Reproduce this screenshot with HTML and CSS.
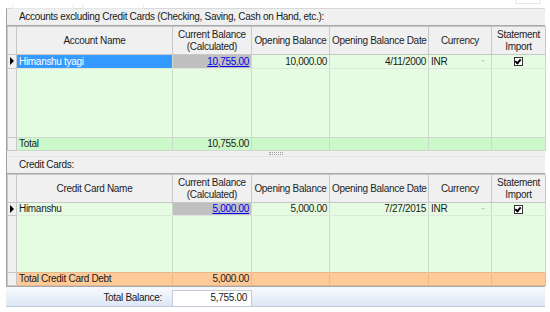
FILE: index.html
```html
<!DOCTYPE html>
<html lang="en">
<head>
    <meta charset="UTF-8">
    <title>Accounts</title>
    <link rel="stylesheet" href="styles.css">
</head>
<body>
    <div class="tabs">
        <span class="tab"></span>
        <span class="tab"></span>
        <span class="tab tab-right"></span>
    </div>
    <div class="panel">
        <div class="section-title">Accounts excluding Credit Cards (Checking, Saving, Cash on Hand, etc.):</div>
        <table class="grid">
            <colgroup>
                <col class="c-rh"><col class="c-name"><col class="c-cur"><col class="c-open"><col class="c-date"><col class="c-ccy"><col class="c-stmt">
            </colgroup>
            <tr class="head">
                <th class="rh"></th>
                <th>Account Name</th>
                <th>Current Balance<br>(Calculated)</th>
                <th>Opening Balance</th>
                <th>Opening Balance Date</th>
                <th>Currency</th>
                <th>Statement<br>Import</th>
            </tr>
            <tr class="row">
                <td class="rh"><span class="arrow"></span></td>
                <td class="selected"><span class="focus">Himanshu tyagi</span></td>
                <td class="num calc"><a href="#">10,755.00</a></td>
                <td class="num">10,000.00</td>
                <td class="num">4/11/2000</td>
                <td class="ccy">INR<span class="drop"></span></td>
                <td class="chk"><span class="box"></span></td>
            </tr>
            <tr class="filler filler-1">
                <td class="rh"></td><td></td><td></td><td></td><td></td><td></td><td></td>
            </tr>
            <tr class="total total-green">
                <td class="rh"></td>
                <td>Total</td>
                <td class="num">10,755.00</td>
                <td></td><td></td><td></td><td></td>
            </tr>
        </table>
        <div class="splitter"><span class="grip"></span></div>
        <div class="section-title">Credit Cards:</div>
        <table class="grid">
            <colgroup>
                <col class="c-rh"><col class="c-name"><col class="c-cur"><col class="c-open"><col class="c-date"><col class="c-ccy"><col class="c-stmt">
            </colgroup>
            <tr class="head">
                <th class="rh"></th>
                <th>Credit Card Name</th>
                <th>Current Balance<br>(Calculated)</th>
                <th>Opening Balance</th>
                <th>Opening Balance Date</th>
                <th>Currency</th>
                <th>Statement<br>Import</th>
            </tr>
            <tr class="row">
                <td class="rh"><span class="arrow"></span></td>
                <td>Himanshu</td>
                <td class="num calc"><a href="#">5,000.00</a></td>
                <td class="num">5,000.00</td>
                <td class="num">7/27/2015</td>
                <td class="ccy">INR<span class="drop"></span></td>
                <td class="chk"><span class="box"></span></td>
            </tr>
            <tr class="filler filler-2">
                <td class="rh"></td><td></td><td></td><td></td><td></td><td></td><td></td>
            </tr>
            <tr class="total total-orange">
                <td class="rh"></td>
                <td>Total Credit Card Debt</td>
                <td class="num">5,000.00</td>
                <td></td><td></td><td></td><td></td>
            </tr>
        </table>
    </div>
    <div class="footer-bar">
        <label class="balance-label">Total Balance:</label>
        <div class="balance-box">5,755.00</div>
    </div>
</body>
</html>
```

FILE: styles.css
```css
/* Base */
body {
    margin: 0;
    background: #fff;
    font-family: "Liberation Sans", Arial, sans-serif;
    font-size: 10px;
    letter-spacing: -0.3px;
    color: #1a1a1a;
}

/* Tabs peeking at the top */
.tabs {
    height: 8px;
    position: relative;
    margin: 0 5px 0 6px;
}

.tab {
    display: inline-block;
    width: 60px;
    height: 3px;
    border: 1px solid #e4e7ec;
    border-top: none;
    margin-left: 6px;
}

.tab-right {
    position: absolute;
    right: 4px;
    top: 0;
    width: 24px;
}

/* Panel */
.panel {
    margin: 0 5px 0 6px;
    border-left: 1px solid #a0a0a0;
    border-top: 1px solid #d8d8d8;
    background: #f0f0f0;
}

.section-title {
    height: 16px;
    line-height: 16px;
    padding-left: 12px;
    background: #f0f0f0;
    border-bottom: 1px solid #a8a8a8;
}

/* Grid */
.grid {
    width: 538px;
    border-collapse: collapse;
    table-layout: fixed;
    background: #e5fce3;
}

.c-rh { width: 9px; }
.c-name { width: 156px; }
.c-cur { width: 79px; }
.c-open { width: 78px; }
.c-date { width: 99px; }
.c-ccy { width: 63px; }
.c-stmt { width: 54px; }

.grid th,
.grid td {
    border: 1px solid #cfd8cd;
    padding: 0 2px;
    white-space: nowrap;
    overflow: hidden;
}

.grid th {
    background: #f0f0f0;
    border-color: #c8c8c8;
    font-weight: normal;
    height: 27px;
    line-height: 12px;
    color: #1e1e1e;
}

.grid .rh {
    background: #f0f0f0;
    border-color: #c8c8c8;
    padding: 0;
    position: relative;
}

.row td {
    height: 12px;
    line-height: 12px;
    border-bottom-color: #dfe8dd;
}

.num {
    text-align: right;
}

.calc {
    background: #c0c0c0;
}

.calc a {
    color: #0000ee;
}

.selected {
    background: #3399ff;
    color: #fff;
    padding: 0 !important;
}

.focus {
    display: block;
    height: 11px;
    line-height: 11px;
    padding-left: 1px;
    border: 1px dotted #e07820;
}

.arrow {
    position: absolute;
    left: 2px;
    top: 2px;
    width: 0;
    height: 0;
    border-top: 4px solid transparent;
    border-bottom: 4px solid transparent;
    border-left: 4px solid #000;
}

.ccy {
    position: relative;
}

.drop {
    position: absolute;
    right: 6px;
    top: 5px;
    border-left: 2px solid transparent;
    border-right: 2px solid transparent;
    border-top: 2px solid #c8c8c8;
}

.chk {
    text-align: center;
}

.box {
    display: inline-block;
    width: 7px;
    height: 7px;
    border: 1px solid #333;
    background: #fff;
    position: relative;
    vertical-align: middle;
}

.box::after {
    content: "";
    position: absolute;
    left: 1px;
    top: 0;
    width: 2px;
    height: 4px;
    border-right: 2px solid #000;
    border-bottom: 2px solid #000;
    transform: rotate(40deg);
}

.filler td {
    border-top: none;
    border-bottom: none;
}

.filler-1 td { height: 68px; }
.filler-2 td { height: 56px; }

.total td {
    height: 12px;
    line-height: 12px;
}

.total-green td {
    background: #ccf9c9;
}

.total-orange td {
    background: #fdca98;
    border-color: #e8b88a;
}

.total .rh {
    background: #f0f0f0;
}

/* Splitter between the grids */
.splitter {
    height: 5px;
    background: #f0f0f0;
    border-bottom: 1px solid #e4e4e4;
    display: flex;
    justify-content: center;
    align-items: center;
}

.grip {
    width: 14px;
    height: 1px;
    border-top: 1px dotted #a0a0a0;
    border-bottom: 1px dotted #a0a0a0;
}

/* Footer with total balance */
.footer-bar {
    margin: 0 5px 0 6px;
    height: 19px;
    border-top: 1px solid #a2a8b2;
    border-bottom: 1px solid #c4ccd8;
    background: linear-gradient(#f8fafd, #dce7f6);
    display: flex;
    align-items: flex-end;
}

.balance-label {
    width: 156px;
    text-align: right;
    padding-right: 10px;
    line-height: 16px;
}

.balance-box {
    width: 74px;
    height: 15px;
    line-height: 14px;
    border: 1px solid #c8ccd2;
    border-bottom: none;
    background: #fff;
    text-align: right;
    padding-right: 4px;
}
```
